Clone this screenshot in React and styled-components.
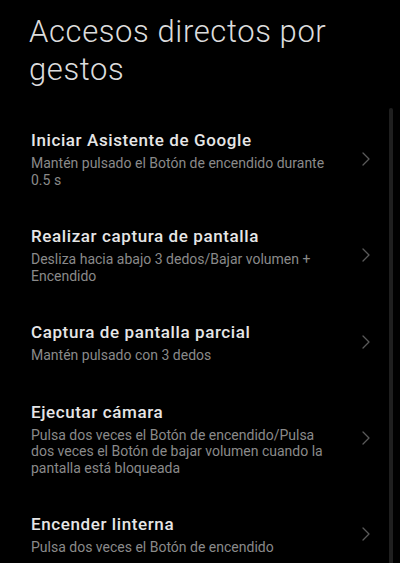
import React from "react";
import styled, { createGlobalStyle } from "styled-components";

const Global = createGlobalStyle`
  html, body { margin: 0; padding: 0; background: #000; }
  body { font-family: Roboto, "Noto Sans", "Liberation Sans", sans-serif; }
`;

const Page = styled.div`
  position: relative;
  width: 400px;
  height: 563px;
  overflow: hidden;
  background: #000;
`;

const Header = styled.h1`
  margin: 0;
  padding: 13px 30px 22px 29px;
  font-size: 31px;
  line-height: 38px;
  font-weight: 300;
  color: #dcdcdc;
  letter-spacing: 0.6px;
`;

const List = styled.div`
  display: flex;
  flex-direction: column;
`;

const Row = styled.div`
  display: flex;
  align-items: center;
  padding: 18px 30px 19px 31px;
`;

const Texts = styled.div`
  width: 304px;
  display: flex;
  flex-direction: column;
  gap: 4px;
`;

const Title = styled.div`
  font-size: 17px;
  line-height: 22px;
  font-weight: 500;
  color: #e6e6e6;
  letter-spacing: 0.6px;
`;

const Sub = styled.div`
  font-size: 14px;
  line-height: 16.5px;
  font-weight: 400;
  color: #8a8a8a;
`;

const Chevron = styled.svg`
  margin-left: auto;
  width: 8px;
  height: 14px;
  flex: none;
`;

const Scrollbar = styled.div`
  position: absolute;
  left: 389px;
  top: 108px;
  width: 4px;
  bottom: 0;
  border-radius: 2px 2px 0 0;
  background: #1f1f1f;
`;

const items = [
  ["Iniciar Asistente de Google", "Mantén pulsado el Botón de encendido durante 0.5 s"],
  ["Realizar captura de pantalla", "Desliza hacia abajo 3 dedos/Bajar volumen + Encendido"],
  ["Captura de pantalla parcial", "Mantén pulsado con 3 dedos"],
  ["Ejecutar cámara", "Pulsa dos veces el Botón de encendido/Pulsa dos veces el Botón de bajar volumen cuando la pantalla está bloqueada"],
  ["Encender linterna", "Pulsa dos veces el Botón de encendido"],
];

export default function App() {
  return (
    <Page>
      <Global />
      <Header>Accesos directos por gestos</Header>
      <List>
        {items.map(([t, s]) => (
          <Row key={t}>
            <Texts>
              <Title>{t}</Title>
              <Sub>{s}</Sub>
            </Texts>
            <Chevron viewBox="0 0 8 14">
              <path d="M1 1 L7 7 L1 13" fill="none" stroke="#5a5a5a" strokeWidth="1.3" strokeLinecap="round" strokeLinejoin="round" />
            </Chevron>
          </Row>
        ))}
      </List>
      <Scrollbar />
    </Page>
  );
}
